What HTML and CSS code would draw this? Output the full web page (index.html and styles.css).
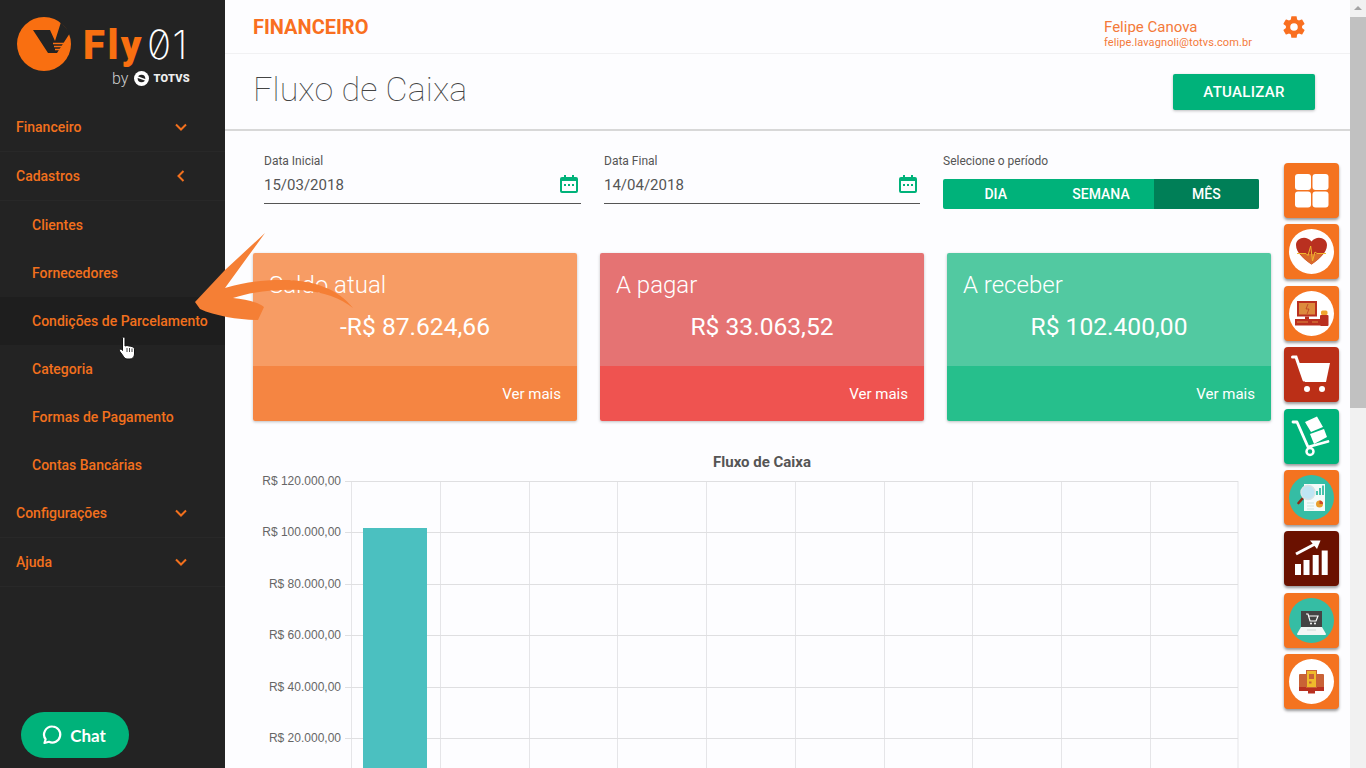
FILE: index.html
```html
<!DOCTYPE html>
<html lang="pt-BR">
<head>
<meta charset="utf-8">
<title>Fluxo de Caixa</title>
<link rel="stylesheet" href="styles.css">
</head>
<body>

<aside class="sidebar">
	<div class="logo">
		<svg class="logoMark" width="54" height="54" viewBox="0 0 54 54">
			<circle cx="27" cy="27" r="27" fill="#f96f11"/>
			<path d="M16 13 L33 13 L38 24 L44 5 L53 16 L40 36 L31 36 Z" fill="#232323"/>
			<path d="M36 26.500 H50 M37 29.500 H50 M38 32.500 H50" stroke="#f96f11" stroke-width="1.300"/>
		</svg>
		<div class="logoText">
			<div class="logoName"><span class="logoFly">Fly</span><span class="logo01">01</span></div>
			<div class="logoBy">
				<span>by</span>
				<svg width="15" height="15" viewBox="0 0 15 15">
					<circle cx="7.500" cy="7.500" r="7.500" fill="#fff"/>
					<circle cx="7.500" cy="7.500" r="3.800" fill="#232323"/>
					<path d="M2 5.500 L13 9.500" stroke="#fff" stroke-width="1.500"/>
				</svg>
				<b>TOTVS</b>
			</div>
		</div>
	</div>

	<nav class="menu">
		<a class="menuItem">Financeiro
			<svg class="chev" width="14" height="14" viewBox="0 0 14 14"><path d="M2 4.500 L7 9.500 L12 4.500"/></svg>
		</a>
		<a class="menuItem">Cadastros
			<svg class="chev" width="14" height="14" viewBox="0 0 14 14"><path d="M9.500 2 L4.500 7 L9.500 12"/></svg>
		</a>
		<a class="menuSub">Clientes</a>
		<a class="menuSub">Fornecedores</a>
		<a class="menuSub hover">Condições de Parcelamento</a>
		<a class="menuSub">Categoria</a>
		<a class="menuSub">Formas de Pagamento</a>
		<a class="menuSub">Contas Bancárias</a>
		<a class="menuItem">Configurações
			<svg class="chev" width="14" height="14" viewBox="0 0 14 14"><path d="M2 4.500 L7 9.500 L12 4.500"/></svg>
		</a>
		<a class="menuItem">Ajuda
			<svg class="chev" width="14" height="14" viewBox="0 0 14 14"><path d="M2 4.500 L7 9.500 L12 4.500"/></svg>
		</a>
	</nav>

	<a class="chatBtn">
		<svg width="22" height="22" viewBox="0 0 22 22"><path d="M11.500 2.500 A8 8 0 1 1 8 17.800 L3.500 19 L4.600 15.200 A8 8 0 0 1 11.500 2.500 Z" fill="none" stroke="#fff" stroke-width="2.200" stroke-linejoin="round"/></svg>
		Chat
	</a>
</aside>

<main class="main">
	<header class="topbar">
		<div class="section">FINANCEIRO</div>
		<div class="user">
			<div class="userName">Felipe Canova</div>
			<div class="userMail">felipe.lavagnoli@totvs.com.br</div>
		</div>
		<svg class="gear" width="26" height="26" viewBox="0 0 24 24"><path fill="#f96f20" d="M19.400 13c.04-.32.1-.66.1-1s-.06-.68-.1-1l2.100-1.650c.2-.15.25-.42.13-.64l-2-3.460c-.12-.22-.4-.3-.6-.22l-2.500 1c-.52-.4-1.080-.73-1.700-.98l-.37-2.650A.506.506 0 0 0 14 2h-4c-.25 0-.46.18-.5.42l-.37 2.650c-.62.25-1.180.58-1.700.98l-2.500-1a.5.5 0 0 0-.6.22l-2 3.460c-.13.22-.07.49.12.64L4.570 11c-.04.32-.07.66-.07 1s.03.68.07 1l-2.110 1.650c-.19.15-.25.42-.12.64l2 3.460c.12.22.39.3.6.22l2.490-1c.52.4 1.080.73 1.700.98l.37 2.650c.04.24.25.42.5.42h4c.25 0 .46-.18.5-.42l.37-2.650c.62-.25 1.180-.58 1.700-.98l2.500 1c.22.08.48 0 .6-.22l2-3.460c.12-.22.07-.49-.13-.64L19.400 13zM12 15.500a3.500 3.500 0 1 1 0-7 3.500 3.500 0 0 1 0 7z"/></svg>
	</header>

	<div class="titleBar">
		<h1 class="pageTitle">Fluxo de Caixa</h1>
		<a class="updateBtn">ATUALIZAR</a>
	</div>

	<div class="body">
		<div class="content">
			<div class="filters">
				<div class="field">
					<label>Data Inicial</label>
					<div class="fieldValue">15/03/2018
						<svg width="20" height="20" viewBox="0 0 20 20"><path class="calIcon" d="M3 3 H5 V1 H7 V3 H13 V1 H15 V3 H17 A2 2 0 0 1 19 5 V17 A2 2 0 0 1 17 19 H3 A2 2 0 0 1 1 17 V5 A2 2 0 0 1 3 3 Z M3 7 V17 H17 V7 Z M5 10 H7 V12 H5 Z M9 10 H11 V12 H9 Z M13 10 H15 V12 H13 Z"/></svg>
					</div>
				</div>
				<div class="field">
					<label>Data Final</label>
					<div class="fieldValue">14/04/2018
						<svg width="20" height="20" viewBox="0 0 20 20"><path class="calIcon" d="M3 3 H5 V1 H7 V3 H13 V1 H15 V3 H17 A2 2 0 0 1 19 5 V17 A2 2 0 0 1 17 19 H3 A2 2 0 0 1 1 17 V5 A2 2 0 0 1 3 3 Z M3 7 V17 H17 V7 Z M5 10 H7 V12 H5 Z M9 10 H11 V12 H9 Z M13 10 H15 V12 H13 Z"/></svg>
					</div>
				</div>
				<div class="field">
					<label>Selecione o período</label>
					<div class="periods">
						<a>DIA</a>
						<a>SEMANA</a>
						<a class="active">MÊS</a>
					</div>
				</div>
			</div>

			<div class="cards">
				<div class="card cardOrange">
					<div class="cardTop">
						<div class="cardTitle">Saldo atual</div>
						<div class="cardValue">-R$ 87.624,66</div>
					</div>
					<div class="cardFoot">Ver mais</div>
				</div>
				<div class="card cardRed">
					<div class="cardTop">
						<div class="cardTitle">A pagar</div>
						<div class="cardValue">R$ 33.063,52</div>
					</div>
					<div class="cardFoot">Ver mais</div>
				</div>
				<div class="card cardGreen">
					<div class="cardTop">
						<div class="cardTitle">A receber</div>
						<div class="cardValue">R$ 102.400,00</div>
					</div>
					<div class="cardFoot">Ver mais</div>
				</div>
			</div>

			<svg class="chart" width="1018" height="330" viewBox="253 440 1018 330">
				<text class="chartTitle" x="762" y="467">Fluxo de Caixa</text>
				<g class="gridV">
					<path d="M351.500 481 V770 M440.500 481 V770 M529.500 481 V770 M617.500 481 V770 M706.500 481 V770 M795.500 481 V770 M884.500 481 V770 M972.500 481 V770 M1061.500 481 V770 M1150.500 481 V770 M1238 481 V770"/>
				</g>
				<g class="gridH">
					<path d="M345 481.500 H1238 M345 532.500 H1238 M345 584.500 H1238 M345 635.500 H1238 M345 687.500 H1238 M345 738.500 H1238"/>
				</g>
				<rect class="bar" x="363" y="528" width="64" height="242"/>
				<g class="axis">
					<text x="341" y="485">R$ 120.000,00</text>
					<text x="341" y="536">R$ 100.000,00</text>
					<text x="341" y="588">R$ 80.000,00</text>
					<text x="341" y="639">R$ 60.000,00</text>
					<text x="341" y="691">R$ 40.000,00</text>
					<text x="341" y="742">R$ 20.000,00</text>
				</g>
			</svg>
		</div>

		<div class="rail">
			<a class="railBtn">
				<svg width="55" height="55" viewBox="0 0 55 55">
					<g fill="#fff"><rect x="11" y="11" width="16" height="16" rx="3"/><rect x="28.500" y="11" width="16" height="16" rx="3"/><rect x="11" y="28.500" width="16" height="16" rx="3"/><rect x="28.500" y="28.500" width="16" height="16" rx="3"/></g>
				</svg>
			</a>
			<a class="railBtn">
				<svg width="55" height="55" viewBox="0 0 55 55">
					<circle cx="27.500" cy="27.500" r="22.500" fill="#fff"/>
					<path d="M27.500 40.500 C20 35 12 29 12 21 C12 14 22 10.500 27.500 17.500 C33 10.500 43 14 43 21 C43 29 35 35 27.500 40.500 Z" fill="#b93020"/>
					<path d="M27.500 40.500 C23 37.500 19 34 16 30 H39 C36 34 32 37.500 27.500 40.500 Z" fill="#d96a2c"/>
					<path d="M13 29.500 H22 L24 31.500 L26.700 22 L28.500 37 L31 28 L33 29.500 H42" fill="none" stroke="#f0b72f" stroke-width="1"/>
				</svg>
			</a>
			<a class="railBtn">
				<svg width="55" height="55" viewBox="0 0 55 55">
					<circle cx="27.500" cy="27.500" r="22.500" fill="#fff"/>
					<rect x="13" y="15" width="20" height="15.500" fill="#b93020"/>
					<rect x="15" y="17" width="16" height="11.500" fill="#dd8a3c"/>
					<path d="M24 18 L22 23 H25 L23 28" stroke="#b93020" fill="none" stroke-width=".7"/>
					<rect x="21" y="30.500" width="4" height="2.500" fill="#b93020"/>
					<rect x="11" y="33" width="25" height="6.500" fill="#b93020"/>
					<path d="M13 36 H24 M28 36 H34" stroke="#dd8a3c"/>
					<rect x="36" y="29" width="8.500" height="11" rx="1" fill="#b93020"/>
					<rect x="37" y="24.500" width="6.500" height="4.500" rx="1.500" fill="#f0a52f"/>
				</svg>
			</a>
			<a class="railBtn railRed">
				<svg width="55" height="55" viewBox="0 0 55 55">
					<path d="M15 16 H46 L42 35 H21 Z" fill="#fff"/>
					<path d="M8.500 10 H12 L20 33" stroke="#fff" stroke-width="3" fill="none" stroke-linecap="round"/>
					<circle cx="23" cy="42" r="3" fill="#fff"/><circle cx="38" cy="42" r="3" fill="#fff"/>
				</svg>
			</a>
			<a class="railBtn railGreen">
				<svg width="55" height="55" viewBox="0 0 55 55">
					<path d="M9 13 L13 13 L24 38 L44 32.500" stroke="#fff" stroke-width="2.800" fill="none" stroke-linecap="round" stroke-linejoin="round"/>
					<circle cx="26" cy="42.500" r="3.500" fill="none" stroke="#fff" stroke-width="2.500"/>
					<path d="M21 13 L33 7.500 L39 18 L27 23 Z M26 25 L40 20 L43 28 L30 35 Z" fill="#fff"/>
				</svg>
			</a>
			<a class="railBtn">
				<svg width="55" height="55" viewBox="0 0 55 55">
					<circle cx="27.500" cy="27.500" r="22.500" fill="#35bda4"/>
					<rect x="20" y="14" width="21" height="27" fill="#f4fbfa"/>
					<path d="M33 25 V21 M36 25 V18 M39 25 V15.500" stroke="#35bda4" stroke-width="1.800"/>
					<circle cx="35.500" cy="34" r="3.500" fill="#e8a02c"/>
					<path d="M35.500 34 V30.500 A3.500 3.500 0 0 1 39 34 Z" fill="#d2492a"/>
					<path d="M23 33 H30 M23 36 H30 M23 39 H30" stroke="#cfe5e1"/>
					<path d="M19 28 L14.500 33" stroke="#8c2c17" stroke-width="2.600" stroke-linecap="round"/>
					<circle cx="24" cy="22.500" r="7" fill="#bfe5f3" stroke="#d8e3e6" stroke-width="1.500"/>
				</svg>
			</a>
			<a class="railBtn railDark">
				<svg width="55" height="55" viewBox="0 0 55 55">
					<g fill="#fff"><rect x="11" y="33" width="6" height="11"/><rect x="19.500" y="29" width="6" height="15"/><rect x="28.700" y="24" width="6" height="20"/><rect x="37.700" y="19.500" width="6" height="24.500"/></g>
					<path d="M12 23 L31 13" stroke="#fff" stroke-width="3"/>
					<path d="M26 9.500 H36.500 L33 18 Z" fill="#fff"/>
				</svg>
			</a>
			<a class="railBtn">
				<svg width="55" height="55" viewBox="0 0 55 55">
					<circle cx="27.500" cy="27.500" r="22.500" fill="#35bda4"/>
					<path d="M17 18 H38 V34 H17 Z" fill="#444"/>
					<path d="M17 34 H38 L42 41 C42 42 41 42 40 42 H15 C14 42 13 42 13 41 Z" fill="#f2f6f5"/>
					<path d="M23 37 H32" stroke="#cfd8d6"/>
					<path d="M22 21 H24 L26 28 H32 L34 23 H25" fill="none" stroke="#fff" stroke-width="1.200"/>
					<circle cx="27" cy="30.500" r="1" fill="#fff"/><circle cx="31" cy="30.500" r="1" fill="#fff"/>
				</svg>
			</a>
			<a class="railBtn">
				<svg width="55" height="55" viewBox="0 0 55 55">
					<circle cx="27.500" cy="27.500" r="22.500" fill="#fff"/>
					<rect x="15" y="20" width="25" height="17" rx="1" fill="#c96236"/>
					<rect x="15" y="33" width="25" height="4" fill="#b93020"/>
					<rect x="24" y="37" width="7" height="2.500" fill="#b93020"/>
					<rect x="22.500" y="16.500" width="10" height="17" fill="#efba2b" stroke="#c96236"/>
					<path d="M25 20 H30 V25 H25 Z M25 27.500 H27.500 V29.500 H25 Z" fill="#c96236"/>
				</svg>
			</a>
		</div>
	</div>
</main>

<div class="scrollbar">
	<div class="scrollUp"></div>
	<div class="scrollThumb"></div>
</div>

<svg class="arrow" width="170" height="100" viewBox="190 228 170 100">
	<path d="M265 233 L225 288 C245 282 262 280 280 280 C310 279 338 288 353 308 C340 298 325 292 300 290 C275 289 250 292 233 298 C245 299 258 302 264 307 L258 320 C240 320 215 316 200 309 L195 302 L225 270 Z"/>
</svg>

<svg class="cursor" width="20" height="26" viewBox="0 0 20 26">
	<path d="M4.500 2 C4.500 .8 7 .8 7 2 V10 L9 9.500 L11 10 L13 10.200 L15 11 C16 11.500 16.500 12 16.500 14 V18 C16.500 21 14.500 23 12 23 H9 C7.500 23 6.500 22 5.500 20.500 L1.500 15 C.8 13.800 2.400 12.500 3.500 13.500 L4.500 14.500 Z" fill="#fff" stroke="#111"/>
	<path d="M9 12 V16 M11.500 12 V16 M14 12.500 V16" stroke="#111" stroke-width=".8"/>
</svg>

</body>
</html>
```

FILE: styles.css
```css
* {
	box-sizing: border-box;
}

html, body {
	margin: 0;
	height: 768px;
	overflow: hidden;
}

body {
	display: flex;
	font-family: Roboto, "Liberation Sans", sans-serif;
	background-color: #fdfdff;
}

/* sidebar */
.sidebar {
	width: 225px;
	flex: none;
	display: flex;
	flex-direction: column;
	background-color: #232323;
}

.logo {
	height: 103px;
	display: flex;
	padding: 17px 0 0 17px;
}

.logoMark {
	flex: none;
}

.logoText {
	margin-left: 12px;
	padding-top: 6px;
	color: #fff;
}

.logoName {
	display: flex;
	align-items: baseline;
	height: 44px;
	line-height: 44px;
	font-size: 40px;
}

.logoFly {
	color: #f96f11;
	font-weight: 900;
	letter-spacing: 2.500px;
}

.logo01 {
	margin-left: 3px;
	font-family: Inter, Roboto, sans-serif;
	font-weight: 200;
	font-size: 40px;
	letter-spacing: 1px;
	font-variant-numeric: slashed-zero;
	color: #fff;
}

.logoBy {
	display: flex;
	align-items: center;
	justify-content: flex-end;
	gap: 6px;
	width: 107px;
	margin-top: 2px;
	font-size: 16px;
	font-weight: 300;
	color: #ccc;
}

.logoBy svg {
	margin-right: -2px;
}

.logoBy b {
	font-size: 11px;
	font-weight: 900;
	color: #eee;
	letter-spacing: .3px;
}

.menuItem, .menuSub {
	display: flex;
	align-items: center;
	justify-content: space-between;
	font-size: 14px;
	font-weight: 500;
	color: #f2701d;
	white-space: nowrap;
}

.menuItem {
	height: 49px;
	padding: 0 37px 0 16px;
	border-bottom: 1px solid #282828;
}

.menuSub {
	height: 48px;
	padding-left: 32px;
}

.menuSub.hover {
	background-color: #1e1e1e;
}

.chev {
	fill: none;
	stroke: #f2701d;
	stroke-width: 2;
}

.chatBtn {
	display: flex;
	align-items: center;
	justify-content: center;
	gap: 7px;
	width: 108px;
	height: 46px;
	margin: auto 0 10px 21px;
	padding-right: 3px;
	border-radius: 23px;
	background-color: #00b27a;
	color: #fff;
	font-family: Lato, sans-serif;
	font-size: 17px;
	font-weight: 700;
}

/* main column */
.main {
	flex: 1;
	min-width: 0;
}

.topbar {
	height: 54px;
	display: flex;
	align-items: center;
	padding-left: 28px;
	border-bottom: 1px solid #f1f1f3;
}

.section {
	flex: 1;
	font-size: 20px;
	font-weight: 700;
	color: #f96f20;
}

.user {
	align-self: flex-start;
	margin-top: 18px;
}

.userName {
	font-size: 15px;
	line-height: 18px;
	color: #f47a3a;
}

.userMail {
	font-size: 11px;
	line-height: 14px;
	letter-spacing: .1px;
	color: #f47a3a;
}

.gear {
	margin: 0 43px 0 29px;
}

.titleBar {
	height: 77px;
	display: flex;
	align-items: center;
	justify-content: space-between;
	padding: 0 35px 0 28px;
	border-bottom: 2px solid #d8d8d8;
}

.pageTitle {
	margin: 0 0 5px;
	font-size: 34px;
	font-weight: 100;
	letter-spacing: .1px;
	color: #444;
}

.updateBtn {
	width: 142px;
	height: 36px;
	margin-top: 1px;
	display: flex;
	align-items: center;
	justify-content: center;
	border-radius: 2px;
	background-color: #00b27a;
	color: #fff;
	font-size: 15px;
	font-weight: 500;
	letter-spacing: .3px;
	box-shadow: 0 1px 3px rgba(0,0,0,.25);
}

.body {
	display: flex;
	padding-left: 28px;
}

.content {
	width: 1018px;
	flex: none;
}

/* filters */
.filters {
	display: grid;
	grid-template-columns: 317px 316px 316px;
	column-gap: 23px;
	padding: 23px 12px 0 11px;
	height: 122px;
}

.field label {
	display: block;
	font-size: 12px;
	line-height: 14px;
	color: #555;
}

.fieldValue {
	display: flex;
	align-items: center;
	justify-content: space-between;
	height: 36px;
	padding: 0 2px 1px 0;
	border-bottom: 1px solid #555;
	font-size: 15px;
	color: #555;
}

.fieldValue svg {
	margin: 0 0 3px;
}

.calIcon {
	fill: #00b27a;
	fill-rule: evenodd;
}

.periods {
	display: grid;
	grid-template-columns: repeat(3, 1fr);
	height: 30px;
	margin-top: 11px;
	border-radius: 2px;
	overflow: hidden;
	background-color: #00b27a;
}

.periods a {
	display: flex;
	align-items: center;
	justify-content: center;
	font-size: 14px;
	font-weight: 500;
	color: #fff;
}

.periods a.active {
	background-color: #007f57;
}

/* cards */
.cards {
	display: grid;
	grid-template-columns: repeat(3, 324px);
	column-gap: 23px;
}

.card {
	height: 168px;
	border-radius: 2px;
	overflow: hidden;
	color: #fff;
	box-shadow: 0 1px 3px rgba(0,0,0,.25);
}

.cardTop {
	height: 113px;
	padding: 16px 16px 0;
}

.cardTitle {
	font-size: 24px;
	line-height: 32px;
	font-weight: 300;
}

.cardValue {
	margin-top: 10px;
	font-size: 24.600px;
	line-height: 32px;
	text-align: center;
}

.cardFoot {
	height: 55px;
	padding: 19px 16px 0;
	font-size: 15px;
	line-height: 18px;
	text-align: right;
}

.cardOrange .cardTop { background-color: #f79c64; }
.cardOrange .cardFoot { background-color: #f58542; }
.cardRed .cardTop { background-color: #e57373; }
.cardRed .cardFoot { background-color: #ef5350; }
.cardGreen .cardTop { background-color: #52c9a1; }
.cardGreen .cardFoot { background-color: #26bf8c; }

/* chart */
.chart {
	display: block;
	margin-top: 19px;
}

.chartTitle {
	font-size: 15px;
	font-weight: 700;
	fill: #555;
	text-anchor: middle;
}

.gridV path, .gridH path {
	fill: none;
	stroke: #e5e5e8;
	stroke-width: 1;
}

.gridH path {
	stroke: #dfdfe1;
}

.bar {
	fill: #4bc0c0;
}

.axis text {
	font-family: "Liberation Sans", sans-serif;
	font-size: 12px;
	fill: #666;
	text-anchor: end;
}

/* right icon rail */
.rail {
	display: flex;
	flex-direction: column;
	gap: 6.400px;
	margin: 32px 0 0 13px;
}

.railBtn {
	display: block;
	width: 55px;
	height: 55px;
	border-radius: 4px;
	background-color: #f47320;
	box-shadow: 0 2px 3px rgba(0,0,0,.4);
}

.railBtn svg {
	display: block;
}

.railRed { background-color: #bb2f17; }
.railGreen { background-color: #00b27a; }
.railDark { background-color: #6a1100; }

/* scrollbar */
.scrollbar {
	width: 16px;
	flex: none;
	background-color: #f1f1f1;
}

.scrollUp {
	height: 17px;
	position: relative;
}

.scrollUp::after {
	content: "";
	position: absolute;
	left: 4px;
	top: 6px;
	border-left: 4px solid transparent;
	border-right: 4px solid transparent;
	border-bottom: 4px solid #a3a3a3;
}

.scrollThumb {
	height: 391px;
	background-color: #c1c1c1;
}

/* overlays */
.arrow {
	position: absolute;
	left: 190px;
	top: 228px;
	fill: #f57f35;
}

.cursor {
	position: absolute;
	left: 118px;
	top: 336px;
}
```
